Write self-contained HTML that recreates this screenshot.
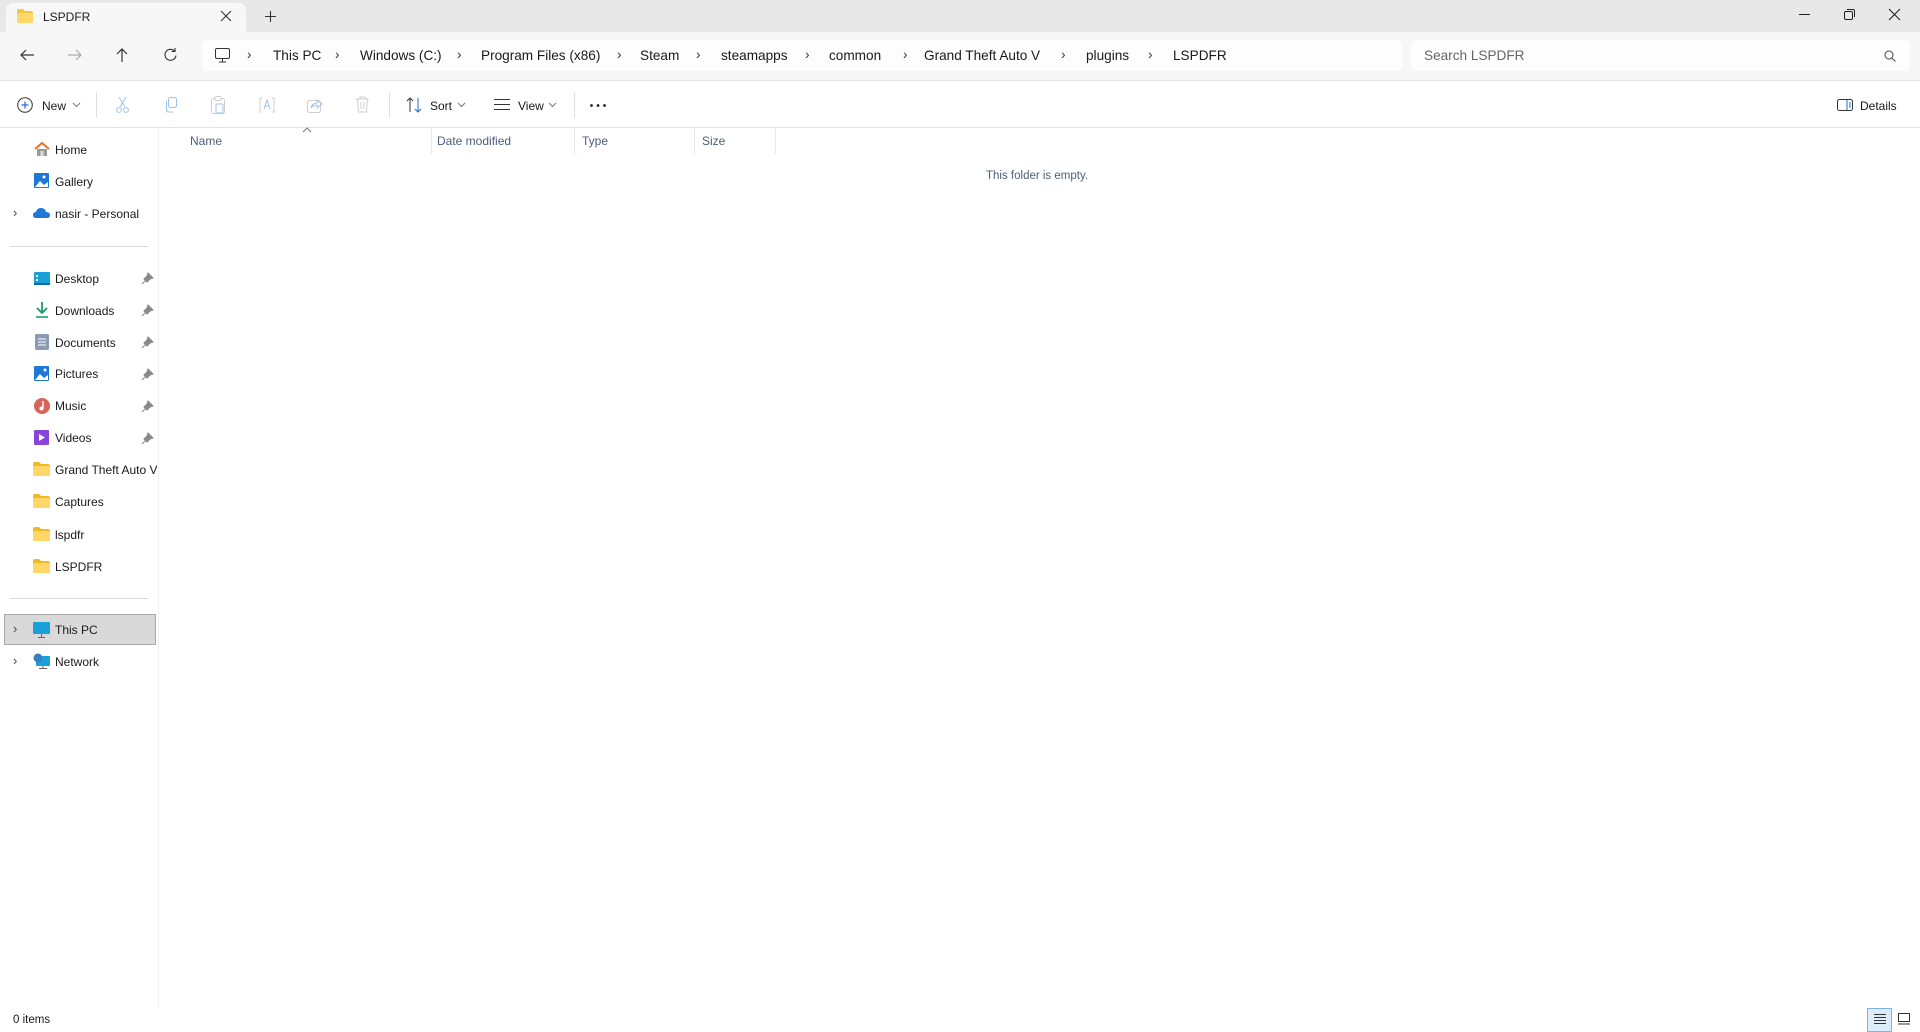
<!DOCTYPE html>
<html><head><meta charset="utf-8"><style>
*{margin:0;padding:0;box-sizing:border-box}
body{width:1920px;height:1032px;overflow:hidden;background:#fff;font-family:"Liberation Sans",sans-serif;color:#1a1a1a;position:relative}
.a{position:absolute;white-space:nowrap}
.t{font-size:12px;line-height:16px}
.b{font-size:13.6px;line-height:18px}
svg{position:absolute;overflow:visible}
.chev{position:absolute;font-size:13px;color:#444}
.sep{position:absolute;width:1px;background:#e0e0e0}
</style></head><body>
<div class="a" style="left:0;top:0;width:1920px;height:32px;background:#e8e8e8"></div>
<div class="a" style="left:6px;top:3px;width:240px;height:30px;background:#f7f7f7;border-radius:7px 7px 0 0"></div>
<svg style="left:17px;top:9px" width="16" height="14"><path d="M0 2 Q0 0 2 0 H6 L8 2 H14 Q16 2 16 4 V12 Q16 14 14 14 H2 Q0 14 0 12Z" fill="#f4c542"/><rect x="0" y="4" width="16" height="10" rx="1.5" fill="#ffd766"/></svg>
<div class="a t" style="left:43px;top:9px;font-size:12px">LSPDFR</div>
<svg style="left:221px;top:11px" width="10" height="10"><path d="M0 0L10 10M10 0L0 10" stroke="#333" stroke-width="1.1"/></svg>
<svg style="left:265px;top:11px" width="11" height="11"><path d="M5.5 0V11M0 5.5H11" stroke="#333" stroke-width="1.1"/></svg>
<svg style="left:1799px;top:14px" width="11" height="2"><path d="M0 0.5H11" stroke="#222"/></svg>
<svg style="left:1844px;top:9px" width="11" height="11"><rect x="0.5" y="2.5" width="8" height="8" rx="1.5" fill="none" stroke="#222"/><path d="M3 0.5H9Q10.5 0.5 10.5 2V8" fill="none" stroke="#222"/></svg>
<svg style="left:1889px;top:9px" width="11" height="11"><path d="M0 0L11 11M11 0L0 11" stroke="#222" stroke-width="1.1"/></svg>
<div class="a" style="left:0;top:32px;width:1920px;height:49px;background:#f7f7f7;border-bottom:1px solid #e3e3e3"></div>
<svg style="left:20px;top:49px" width="14" height="12"><path d="M14 6H1M6 1L1 6L6 11" fill="none" stroke="#333" stroke-width="1.2"/></svg>
<svg style="left:68px;top:49px" width="14" height="12"><path d="M0 6H13M8 1L13 6L8 11" fill="none" stroke="#aaa" stroke-width="1.2"/></svg>
<svg style="left:116px;top:48px" width="12" height="14"><path d="M6 14V1M1 6L6 1L11 6" fill="none" stroke="#333" stroke-width="1.2"/></svg>
<svg style="left:164px;top:48px" width="13" height="13"><path d="M10.5 3A5.5 5.5 0 1 0 12 7.5M11 0V3.5H7.5" fill="none" stroke="#333" stroke-width="1.1"/></svg>
<div class="a" style="left:202px;top:40px;width:1200px;height:31px;background:#fdfdfd;border-radius:5px"></div>
<svg style="left:215px;top:48px" width="15" height="15"><rect x="0.5" y="0.5" width="14" height="10" rx="1.5" fill="none" stroke="#333"/><path d="M7.5 11V14M4 14H11" stroke="#333"/></svg>
<div class="a b" style="left:247px;top:46px;color:#333">›</div>
<div class="a b" style="left:273px;top:47px">This PC</div>
<div class="a b" style="left:335px;top:46px;color:#333">›</div>
<div class="a b" style="left:360px;top:47px">Windows (C:)</div>
<div class="a b" style="left:457px;top:46px;color:#333">›</div>
<div class="a b" style="left:481px;top:47px">Program Files (x86)</div>
<div class="a b" style="left:617px;top:46px;color:#333">›</div>
<div class="a b" style="left:640px;top:47px">Steam</div>
<div class="a b" style="left:696px;top:46px;color:#333">›</div>
<div class="a b" style="left:721px;top:47px">steamapps</div>
<div class="a b" style="left:805px;top:46px;color:#333">›</div>
<div class="a b" style="left:829px;top:47px">common</div>
<div class="a b" style="left:903px;top:46px;color:#333">›</div>
<div class="a b" style="left:924px;top:47px">Grand Theft Auto V</div>
<div class="a b" style="left:1061px;top:46px;color:#333">›</div>
<div class="a b" style="left:1086px;top:47px">plugins</div>
<div class="a b" style="left:1148px;top:46px;color:#333">›</div>
<div class="a b" style="left:1173px;top:47px">LSPDFR</div>
<div class="a" style="left:1411px;top:40px;width:499px;height:31px;background:#fdfdfd;border-radius:5px"></div>
<div class="a b" style="left:1424px;top:47px;color:#666">Search LSPDFR</div>
<svg style="left:1884px;top:50px" width="12" height="12"><circle cx="5" cy="5" r="4" fill="none" stroke="#444"/><path d="M8 8L11.5 11.5" stroke="#444"/></svg>
<div class="a" style="left:0;top:127px;width:1920px;height:1px;background:#e3e3e3"></div>
<svg style="left:17px;top:97px" width="16" height="16"><circle cx="8" cy="8" r="7.3" fill="none" stroke="#333"/><path d="M8 4.5V11.5M4.5 8H11.5" stroke="#1a6fd1" stroke-width="1.2"/></svg>
<div class="a t" style="left:42px;top:98px">New</div>
<svg style="left:73px;top:103px" width="7" height="4"><path d="M0 0L3.5 3.5L7 0" fill="none" stroke="#777"/></svg>
<div class="sep" style="left:96px;top:92px;height:26px"></div>
<svg style="left:116px;top:97px" width="13" height="16"><path d="M3 0L9 10M10 0L4 10" stroke="#9cc3ec"/><circle cx="3" cy="13" r="2.4" fill="none" stroke="#9cc3ec"/><circle cx="10" cy="13" r="2.4" fill="none" stroke="#9cc3ec"/></svg>
<svg style="left:164px;top:97px" width="14" height="16"><rect x="4.5" y="0.5" width="8" height="10" rx="2" fill="none" stroke="#9cc3ec"/><path d="M2.5 4V13Q2.5 15 4.5 15H9" fill="none" stroke="#9cc3ec"/></svg>
<svg style="left:211px;top:96px" width="14" height="18"><rect x="0.5" y="2.5" width="13" height="15" rx="2" fill="none" stroke="#cfcfcf"/><rect x="4" y="0.5" width="6" height="4" rx="1" fill="#fff" stroke="#cfcfcf"/><rect x="5" y="8" width="7" height="9" rx="1" fill="none" stroke="#9cc3ec"/></svg>
<svg style="left:259px;top:97px" width="16" height="16"><path d="M3 1H1V15H3M13 1H15V15H13" fill="none" stroke="#cfcfcf"/><path d="M5 12L8 3L11 12M6 9H10" fill="none" stroke="#9cc3ec"/></svg>
<svg style="left:307px;top:97px" width="16" height="16"><rect x="0.5" y="3.5" width="13" height="12" rx="2" fill="none" stroke="#cfcfcf"/><path d="M4 11Q5 6 10 6V3L15 7L10 11V8Q6 8 4 11Z" fill="none" stroke="#9cc3ec"/></svg>
<svg style="left:356px;top:96px" width="13" height="17"><path d="M0 3H13M4 3V1H9V3M1.5 3L2.5 16H10.5L11.5 3M5 6V13M8 6V13" fill="none" stroke="#cfcfcf"/></svg>
<div class="sep" style="left:389px;top:92px;height:26px"></div>
<svg style="left:406px;top:97px" width="16" height="16"><path d="M4 15V1M1 4L4 1L7 4" fill="none" stroke="#333"/><path d="M12 1V15M9 12L12 15L15 12" fill="none" stroke="#1a6fd1"/></svg>
<div class="a t" style="left:430px;top:98px">Sort</div>
<svg style="left:458px;top:103px" width="7" height="4"><path d="M0 0L3.5 3.5L7 0" fill="none" stroke="#777"/></svg>
<svg style="left:494px;top:99px" width="16" height="11"><path d="M0 .5H16M0 5.5H16M0 10.5H16" stroke="#333"/></svg>
<div class="a t" style="left:518px;top:98px">View</div>
<svg style="left:549px;top:103px" width="7" height="4"><path d="M0 0L3.5 3.5L7 0" fill="none" stroke="#777"/></svg>
<div class="sep" style="left:574px;top:92px;height:26px"></div>
<svg style="left:590px;top:104px" width="16" height="3"><circle cx="1.5" cy="1.5" r="1.4" fill="#222"/><circle cx="8" cy="1.5" r="1.4" fill="#222"/><circle cx="14.5" cy="1.5" r="1.4" fill="#222"/></svg>
<svg style="left:1837px;top:99px" width="16" height="12"><rect x="0.5" y="0.5" width="15" height="11" rx="2" fill="none" stroke="#333"/><path d="M10 0.5V11.5" stroke="#1a6fd1"/><path d="M12 4H14M12 6H14M12 8H14" stroke="#1a6fd1"/></svg>
<div class="a t" style="left:1860px;top:98px">Details</div>
<div class="a" style="left:158px;top:128px;width:1px;height:880px;background:#f0f0f0"></div>
<div class="a" style="left:4px;top:614px;width:152px;height:31px;background:#d9d9d9;border:1px solid #a8a8a8"></div>
<div class="a" style="left:10px;top:246px;width:138px;height:1px;background:#dcdcdc"></div>
<div class="a" style="left:10px;top:598px;width:138px;height:1px;background:#dcdcdc"></div>
<svg style="left:34px;top:142px" width="16" height="14"><path d="M1 7L8 1L15 7" fill="none" stroke="#e8742c" stroke-width="2"/><path d="M3 7V14H13V7" fill="#9a9a9a"/><rect x="6.5" y="9" width="3" height="5" fill="#ddd"/></svg>
<div class="a t" style="left:55px;top:142px">Home</div>
<svg style="left:34px;top:173px" width="16" height="16"><rect x="0" y="0" width="15" height="15" rx="1" fill="#1e78d8"/><path d="M1 14L6 8L10 12L14 9V14Z" fill="#fff"/><circle cx="10" cy="4" r="1.5" fill="#fff"/></svg>
<div class="a t" style="left:55px;top:174px">Gallery</div>
<div class="chev" style="left:13px;top:205px">›</div>
<svg style="left:33px;top:207px" width="17" height="11"><path d="M3 11Q0 11 0 8Q0 5 3 5Q4 1 8 1Q12 1 13 5Q17 5 17 8Q17 11 14 11Z" fill="#1e78d8"/></svg>
<div class="a t" style="left:55px;top:206px">nasir - Personal</div>
<svg style="left:34px;top:272px" width="16" height="13"><rect width="16" height="13" rx="1" fill="#1aa0d8"/><rect x="2" y="3" width="2" height="2" fill="#fff"/><rect x="2" y="7" width="2" height="2" fill="#fff"/><rect x="0" y="11" width="16" height="2" fill="#0a6aa8"/></svg>
<div class="a t" style="left:55px;top:271px">Desktop</div>
<svg style="left:35px;top:302px" width="14" height="16"><path d="M7 0V11M2 6L7 11L12 6" fill="none" stroke="#1a9e6a" stroke-width="1.8"/><path d="M1 15H13" stroke="#1a9e6a" stroke-width="1.6"/></svg>
<div class="a t" style="left:55px;top:303px">Downloads</div>
<svg style="left:35px;top:334px" width="14" height="16"><rect width="14" height="16" rx="1.5" fill="#8a9bb3"/><path d="M3 5H11M3 8H11M3 11H11" stroke="#fff"/></svg>
<div class="a t" style="left:55px;top:335px">Documents</div>
<svg style="left:34px;top:366px" width="15" height="15"><rect width="15" height="15" rx="1" fill="#1e78d8"/><path d="M1 14L6 8L10 12L14 9V14Z" fill="#fff"/><circle cx="11" cy="4" r="1.5" fill="#fff"/></svg>
<div class="a t" style="left:55px;top:366px">Pictures</div>
<svg style="left:34px;top:398px" width="16" height="16"><circle cx="8" cy="8" r="8" fill="#d8645a"/><path d="M9 3V10" stroke="#fff" stroke-width="1.5"/><circle cx="7.5" cy="10.5" r="2" fill="#fff"/></svg>
<div class="a t" style="left:55px;top:398px">Music</div>
<svg style="left:34px;top:430px" width="15" height="15"><rect width="15" height="15" rx="1" fill="#8845d8"/><path d="M5 4L11 7.5L5 11Z" fill="#fff"/></svg>
<div class="a t" style="left:55px;top:430px">Videos</div>
<svg style="left:33px;top:462px" width="17" height="14"><path d="M0 2Q0 0 2 0H6L8 2H15Q17 2 17 4V12Q17 14 15 14H2Q0 14 0 12Z" fill="#f0b92a"/><rect x="0" y="4" width="17" height="10" rx="1" fill="#ffd766"/></svg>
<div class="a t" style="left:55px;top:462px;width:102px;overflow:hidden">Grand Theft Auto V</div>
<svg style="left:33px;top:494px" width="17" height="14"><path d="M0 2Q0 0 2 0H6L8 2H15Q17 2 17 4V12Q17 14 15 14H2Q0 14 0 12Z" fill="#f0b92a"/><rect x="0" y="4" width="17" height="10" rx="1" fill="#ffd766"/></svg>
<div class="a t" style="left:55px;top:494px">Captures</div>
<svg style="left:33px;top:527px" width="17" height="14"><path d="M0 2Q0 0 2 0H6L8 2H15Q17 2 17 4V12Q17 14 15 14H2Q0 14 0 12Z" fill="#f0b92a"/><rect x="0" y="4" width="17" height="10" rx="1" fill="#ffd766"/></svg>
<div class="a t" style="left:55px;top:527px">lspdfr</div>
<svg style="left:33px;top:559px" width="17" height="14"><path d="M0 2Q0 0 2 0H6L8 2H15Q17 2 17 4V12Q17 14 15 14H2Q0 14 0 12Z" fill="#f0b92a"/><rect x="0" y="4" width="17" height="10" rx="1" fill="#ffd766"/></svg>
<div class="a t" style="left:55px;top:559px">LSPDFR</div>
<div class="chev" style="left:13px;top:621px">›</div>
<svg style="left:33px;top:622px" width="17" height="16"><rect width="17" height="12" rx="1" fill="#1aa0d8"/><path d="M8.5 12V15M5 15.5H12" stroke="#666"/></svg>
<div class="a t" style="left:55px;top:622px">This PC</div>
<div class="chev" style="left:13px;top:653px">›</div>
<svg style="left:33px;top:653px" width="17" height="16"><rect x="3" y="3" width="14" height="10" rx="1" fill="#1aa0d8"/><circle cx="5" cy="5" r="4.5" fill="#3a7dc0"/><path d="M10 13V15M6 15.5H14" stroke="#666"/></svg>
<div class="a t" style="left:55px;top:654px">Network</div>
<svg style="left:142px;top:273px" width="11" height="11"><path d="M6 0L11 5L8 6L5 9L2 6L5 3Z M3.5 7.5L0 11" fill="#888" stroke="#888"/></svg>
<svg style="left:142px;top:305px" width="11" height="11"><path d="M6 0L11 5L8 6L5 9L2 6L5 3Z M3.5 7.5L0 11" fill="#888" stroke="#888"/></svg>
<svg style="left:142px;top:337px" width="11" height="11"><path d="M6 0L11 5L8 6L5 9L2 6L5 3Z M3.5 7.5L0 11" fill="#888" stroke="#888"/></svg>
<svg style="left:142px;top:369px" width="11" height="11"><path d="M6 0L11 5L8 6L5 9L2 6L5 3Z M3.5 7.5L0 11" fill="#888" stroke="#888"/></svg>
<svg style="left:142px;top:401px" width="11" height="11"><path d="M6 0L11 5L8 6L5 9L2 6L5 3Z M3.5 7.5L0 11" fill="#888" stroke="#888"/></svg>
<svg style="left:142px;top:433px" width="11" height="11"><path d="M6 0L11 5L8 6L5 9L2 6L5 3Z M3.5 7.5L0 11" fill="#888" stroke="#888"/></svg>
<div class="a t" style="left:190px;top:133px;color:#4c607a">Name</div>
<svg style="left:303px;top:128px" width="8" height="4"><path d="M0 4L4 0L8 4" fill="none" stroke="#777"/></svg>
<div class="sep" style="left:431px;top:128px;height:26px;background:#e8e8e8"></div>
<div class="a t" style="left:437px;top:133px;color:#4c607a">Date modified</div>
<div class="sep" style="left:574px;top:128px;height:26px;background:#e8e8e8"></div>
<div class="a t" style="left:582px;top:133px;color:#4c607a">Type</div>
<div class="sep" style="left:694px;top:128px;height:26px;background:#e8e8e8"></div>
<div class="a t" style="left:702px;top:133px;color:#4c607a">Size</div>
<div class="sep" style="left:775px;top:128px;height:26px;background:#e8e8e8"></div>
<div class="a t" style="left:986px;top:168px;color:#4c607a;font-size:11.5px">This folder is empty.</div>
<div class="a t" style="left:13px;top:1012px;font-size:11.5px">0 items</div>
<div class="a" style="left:1867px;top:1008px;width:25px;height:24px;background:#dcecfb;border:1px solid #7fb2e6"></div>
<svg style="left:1874px;top:1014px" width="12" height="11"><path d="M0 .5H12M0 3.5H12M0 6.5H12M0 9.5H12" stroke="#333"/></svg>
<svg style="left:1898px;top:1013px" width="12" height="12"><rect x="0.5" y="0.5" width="11" height="8" fill="none" stroke="#333"/><path d="M0 11H12" stroke="#333"/></svg>
</body></html>
